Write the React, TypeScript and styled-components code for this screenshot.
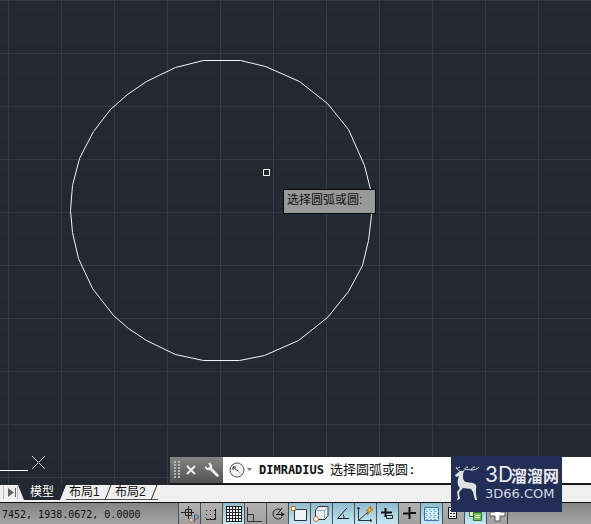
import React from "react";
import styled, { createGlobalStyle, css } from "styled-components";

const GlobalStyle = createGlobalStyle`
  * { box-sizing: border-box; }
  html, body { margin: 0; background: #232831; }
  button, input { font: inherit; color: inherit; margin: 0; padding: 0; border: 0; background: none; }
`;

const cjk = `"Liberation Sans", "Noto Sans CJK SC", sans-serif`;
const mono = `"DejaVu Sans Mono", "Noto Sans CJK SC", monospace`;

const Window = styled.div`
  position: relative;
  display: flex;
  flex-direction: column;
  min-height: 100vh;
  overflow: hidden;
  font: 12px/16px ${cjk};
`;

const Canvas = styled.main`
  position: relative;
  flex: 1;
  display: flex;
  flex-direction: column;
  justify-content: flex-end;
  background-color: #232831;
  background-image:
    linear-gradient(90deg, #343a45 1px, transparent 1px),
    linear-gradient(#343a45 1px, transparent 1px),
    linear-gradient(#272c36 1px, transparent 1px);
  background-size: 53px 53px, 53px 53px, 53px 32px;
  background-position: 8px 0, 0 0, 0 9px;
`;

const Drawing = styled.svg`
  position: absolute;
  left: 0;
  top: 0;
`;

const Prompt = styled.div`
  position: absolute;
  left: 283px;
  top: 189px;
  width: 93px;
  height: 25px;
  padding: 2px 3px;
  border: 1px solid #08090b;
  background: #999;
  color: #111;
  white-space: nowrap;
`;

const CommandBar = styled.div`
  position: relative;
  display: flex;
  height: 28px;
  margin-left: 170px;
  border-bottom: 2px solid #16181c;
  background: #fff;
`;

const CommandTools = styled.div`
  display: flex;
  align-items: center;
  width: 53px;
  padding-left: 4px;
  background: linear-gradient(#858585, #515151);
`;

const ToolButton = styled.button`
  display: flex;
  align-items: center;
  justify-content: center;
  width: 22px;
  height: 26px;
`;

const RecentButton = styled(ToolButton)`
  width: 36px;
`;

const CommandLine = styled.label`
  flex: 1;
  display: flex;
  align-items: center;
  gap: 6px;
  min-width: 0;
  color: #111;
  font: 13px/20px ${mono};
  white-space: nowrap;
`;

const CommandName = styled.strong`
  font: bold 12px/20px ${mono};
`;

const CommandInput = styled.input`
  flex: 1;
  min-width: 0;
  outline: 0;
`;

const LayoutBar = styled.nav`
  display: flex;
  height: 17px;
  background: #f0f0f0;
`;

const NavEnd = styled.button`
  display: flex;
  width: 18px;
  height: 15px;
`;

const Tab = styled.button<{ $active?: boolean }>`
  position: relative;
  width: 46px;
  height: 15px;
  padding-left: 3px;
  color: #111;
  font: 12px/15px ${cjk};
  text-align: left;
  white-space: nowrap;
  border-bottom: 1px solid #555;

  ${(p) =>
    p.$active &&
    css`
      width: 48px;
      padding-left: 12px;
      border-bottom: 0;
      color: #fff;
      background: #232831;
      clip-path: polygon(0 0, 100% 0, 42px 100%, 6px 100%);
    `}
`;

const Slash = styled.svg`
  position: absolute;
  right: 0;
  top: 0;
`;

const StatusBar = styled.footer`
  display: flex;
  height: 22px;
  border-top: 1px solid #111;
  background: linear-gradient(#858585, #a4a4a4);
`;

const Coordinates = styled.output`
  width: 178px;
  padding: 2px 0 0 2px;
  color: #111;
  font: 10px/20px ${mono};
  white-space: pre;
`;

const StatusToggle = styled.button<{ $on?: boolean }>`
  width: 22px;
  height: 21px;
  border-left: 1px solid #4b4f52;
  background: ${(p) =>
    p.$on ? "linear-gradient(#8fbccd, #c6e9f5)" : "linear-gradient(#b2b2b2, #a0a0a0)"};

  &:last-child { border-right: 1px solid #444; }

  svg { display: block; }
`;

const Watermark = styled.a`
  position: absolute;
  right: 29px;
  bottom: 12px;
  display: flex;
  width: 111px;
  height: 56px;
  background: #222e55;
  color: #e8eaf0;
  text-decoration: none;
`;

const Brand = styled.span`
  display: flex;
  flex-direction: column;
  gap: 2px;
  padding-top: 9px;
  white-space: nowrap;
`;

const BrandName = styled.span`
  display: flex;
  align-items: center;
  height: 20px;
  font: bold 16px/20px "Noto Sans CJK SC", sans-serif;
`;

const BrandPrefix = styled.span`
  width: 26px;
  font: 21px/20px Inter, sans-serif;
`;

const BrandSite = styled.span`
  height: 14px;
  font: 13px/14px "DejaVu Sans", sans-serif;
  color: #d3d7e0;
`;

const circlePoints =
  "203,60 240,60 265,66 299,81 327,103 348,129 364,165 370,189 371,215 368,240 362,265 348,291 327,317 298,340 264,355 239,360 203,360 175,354 146,340 128,328 113,315 92,288 78,258 72,232 70,210 72,185 79,158 93,131 110,109 127,94 146,81 175,67";

const icons = {
  infer: (
    <>
      <path d="M2 8.500h13M9.500 2v13M6.500 5.500h6v6h-6z" stroke="#222" fill="none" />
      <path d="M15.500 18v-7h2a2 2 0 0 1 0 4h-2" stroke="#315f91" fill="none" />
      <path d="M11 14.500h3v3h-3z" stroke="#d37b3c" fill="#eee" />
    </>
  ),
  snap: (
    <>
      <path d="M5 6.500h10M5 10.500h10M5 14.500h10" stroke="#333" strokeDasharray="1 3" />
      <path d="M14.500 5v10.500H5" stroke="#222" fill="none" />
    </>
  ),
  grid: (
    <>
      <path d="M3 3h15v14H3z" fill="#f2f7f9" />
      <path d="M3 2.500h15M3 5.500h15M3 8.500h15M3 11.500h15M3 14.500h15M3 17.500h15M3.500 2v16M6.500 2v16M9.500 2v16M12.500 2v16M15.500 2v16M18.500 2v16" stroke="#222" />
    </>
  ),
  ortho: <path d="M2.500 3v14.500H17M2.500 10.500h6v7" stroke="#333" fill="none" />,
  polar: (
    <>
      <path d="M14 6A5 5 0 1 0 15 13M10 11L15 4M9 10.500h7" stroke="#222" fill="none" />
      <path d="M14 8l4 2.500-4 2z" fill="#222" />
    </>
  ),
  osnap: (
    <>
      <path d="M5.500 5.500h12v11h-12z" stroke="#333" fill="#eef4f7" />
      <path d="M2.500 2.500h4v4h-4z" stroke="#d06d2e" fill="#fff" />
    </>
  ),
  osnap3d: (
    <>
      <path d="M4.500 6l3-3.500H17v9l-3 4H4.500z" stroke="#333" fill="#e7eef2" />
      <path d="M6 6.500h7.500V14M13.500 6.500L17 3" stroke="#9daab1" fill="none" />
      <circle cx="5" cy="15" r="2.500" stroke="#d06d2e" fill="#fff" />
    </>
  ),
  track: <path d="M14 4L4.500 14.500H16M10 10.500a5 5 0 0 1 1 4" stroke="#222" fill="none" />,
  ucs: (
    <>
      <path d="M3.500 3v13.500H17M3.500 16.500L13 8M2 5l1.500-2L5 5M15 15l2 1.500-2 1.500" stroke="#333" fill="none" />
      <path d="M16 2l-5 5 3 0-2 4 6-6-3 0z" fill="#f0b943" stroke="#b97820" />
    </>
  ),
  dynamic: (
    <>
      <path d="M4 8.500h11M8.500 4v9" stroke="#111" strokeWidth="2" />
      <path d="M9.500 11.500h6v3h-6z" stroke="#222" fill="#bce0ec" />
    </>
  ),
  weight: <path d="M4 9.500h7M11 9h6M10.500 3v12" stroke="#111" strokeWidth="2" />,
  transparency: (
    <>
      <path d="M3.500 3.500h14v13h-14z" fill="#d9edf5" stroke="#3976a5" />
      <path d="M4 5.500h13M5 7.500h13M4 9.500h13M5 11.500h13M4 13.500h13M5 15.500h13" stroke="#72afd4" strokeDasharray="2 2" />
    </>
  ),
  properties: (
    <>
      <path d="M5.500 3.500h8v11h-8z" stroke="#111" fill="#eee" />
      <path d="M7 6.500h5M7 9.500h5M7 12.500h5" stroke="#222" strokeDasharray="2 1" />
    </>
  ),
  cycling: (
    <>
      <path d="M4.500 3.500h9v9h-9z" stroke="#387b36" fill="#def1d2" />
      <path d="M8.500 8.500h8v8h-8z" stroke="#28742a" fill="#76bc57" />
      <path d="M10 11.500h5M10 13.500h5" stroke="#e8f5df" />
    </>
  ),
  annotation: <path d="M8 3h5v5h5v4h-5v5H8v-5H3V8h5z" fill="#fff" stroke="#555" />,
};

const toggles: { icon: keyof typeof icons; label: string; on?: boolean }[] = [
  { icon: "infer", label: "推断约束" },
  { icon: "snap", label: "捕捉模式" },
  { icon: "grid", label: "栅格显示", on: true },
  { icon: "ortho", label: "正交模式" },
  { icon: "polar", label: "极轴追踪" },
  { icon: "osnap", label: "对象捕捉", on: true },
  { icon: "osnap3d", label: "三维对象捕捉", on: true },
  { icon: "track", label: "对象捕捉追踪", on: true },
  { icon: "ucs", label: "动态 UCS", on: true },
  { icon: "dynamic", label: "动态输入", on: true },
  { icon: "weight", label: "线宽" },
  { icon: "transparency", label: "透明度", on: true },
  { icon: "properties", label: "快捷特性" },
  { icon: "cycling", label: "选择循环", on: true },
  { icon: "annotation", label: "注释监视器" },
];

const TabSlash = () => (
  <Slash width="8" height="15" aria-hidden="true">
    <path d="M1 15L7 0" stroke="#333" fill="none" />
  </Slash>
);

export default function App() {
  return (
    <Window>
      <GlobalStyle />
      <Canvas>
        <Drawing width="400" height="485" aria-hidden="true">
          <polygon points={circlePoints} fill="none" stroke="#f4f5f7" transform="translate(.5 .5)" />
          <path d="M263.500 169.500h6v6h-6z" fill="none" stroke="#fff" />
          <path d="M0 470.500h28" stroke="#fff" />
          <path d="M32 456l13 13M45 456L32 469" stroke="#c9ccd0" />
        </Drawing>
        <Prompt role="tooltip">选择圆弧或圆:</Prompt>
        <CommandBar>
          <CommandTools>
            <svg width="6" height="20" aria-hidden="true">
              <path d="M1 1v18M5 1v18" stroke="#b4b4b4" strokeWidth="2" strokeDasharray="2 1" />
            </svg>
            <ToolButton aria-label="关闭">
              <svg width="12" height="12">
                <path d="M2 2l8 8M10 2l-8 8" stroke="#f3f3f3" strokeWidth="2" />
              </svg>
            </ToolButton>
            <ToolButton aria-label="自定义">
              <svg width="16" height="16">
                <path d="M1 5c0 2 2 4 5 3l6 6c2 2 4 0 2-2L8 6c1-3-1-5-3-5L4 1l2 3-2 2-3-2z" fill="#eee" />
              </svg>
            </ToolButton>
          </CommandTools>
          <RecentButton aria-label="近期使用的命令">
            <svg width="26" height="18">
              <circle cx="9" cy="9" r="7" fill="#f3f3f3" stroke="#555" />
              <path d="M10 10L5 6M5 9V6h3" stroke="#333" fill="none" />
              <path d="M10 10l3 3" stroke="#888" strokeDasharray="1 1" />
              <path d="M19 7h5l-2.500 3z" fill="#777" />
            </svg>
          </RecentButton>
          <CommandLine>
            <CommandName>DIMRADIUS</CommandName>
            选择圆弧或圆:
            <CommandInput aria-label="命令输入" />
          </CommandLine>
        </CommandBar>
      </Canvas>
      <LayoutBar>
        <NavEnd aria-label="最后一个布局">
          <svg width="18" height="15">
            <path d="M3.500 1v13M17.500 1v13" stroke="#bbb" />
            <path d="M8 3l6 4.500L8 12z" fill="#666" />
            <path d="M15.500 3v9" stroke="#666" />
          </svg>
        </NavEnd>
        <Tab $active>模型</Tab>
        <Tab>布局1<TabSlash /></Tab>
        <Tab>布局2<TabSlash /></Tab>
      </LayoutBar>
      <StatusBar>
        <Coordinates>7452, 1938.0672, 0.0000</Coordinates>
        {toggles.map((t) => (
          <StatusToggle key={t.icon} $on={t.on} aria-label={t.label} aria-pressed={!!t.on}>
            <svg width="21" height="20">{icons[t.icon]}</svg>
          </StatusToggle>
        ))}
      </StatusBar>
      <Watermark href="#">
        <svg width="34" height="56" aria-hidden="true">
          <path
            d="M4 19l5-4 4 0-1 3c0 4 0 7 3 8l7 1c3 1 4 3 3 6l0 5 1 6-2 0-2-8-2-3-8-1-3 3-1 2 1 6-3 1 0-1 1-1-1-6 3-4c-3-3-3-7-1-12l-3 1z"
            fill="#dfe1e5"
          />
          <path
            d="M10 16C6 14 5 12 9 11M11 16c2-3 5-3 9-2 4 0 6-1 8-3M14 13c0-1 1-2 3-2M20 14c1-2 2-3 4-3M6 13L5 11"
            fill="none"
            stroke="#dfe1e5"
          />
        </svg>
        <Brand>
          <BrandName><BrandPrefix>3D</BrandPrefix>溜溜网</BrandName>
          <BrandSite>3D66.COM</BrandSite>
        </Brand>
      </Watermark>
    </Window>
  );
}
